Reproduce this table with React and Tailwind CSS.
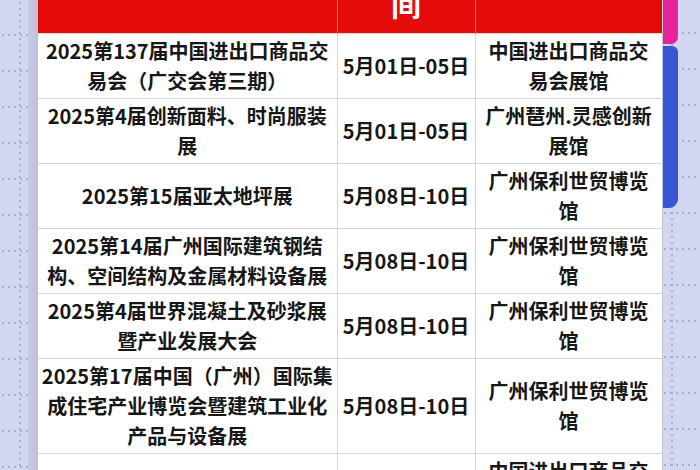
import React from 'react';

const rows = [
    {
        name: ['2025第137届中国进出口商品交', '易会（广交会第三期）'],
        date: '5月01日-05日',
        venue: ['中国进出口商品交', '易会展馆'],
    },
    {
        name: ['2025第4届创新面料、时尚服装', '展'],
        date: '5月01日-05日',
        venue: ['广州琶州.灵感创新', '展馆'],
    },
    {
        name: ['2025第15届亚太地坪展'],
        date: '5月08日-10日',
        venue: ['广州保利世贸博览', '馆'],
    },
    {
        name: ['2025第14届广州国际建筑钢结', '构、空间结构及金属材料设备展'],
        date: '5月08日-10日',
        venue: ['广州保利世贸博览', '馆'],
    },
    {
        name: ['2025第4届世界混凝土及砂浆展', '暨产业发展大会'],
        date: '5月08日-10日',
        venue: ['广州保利世贸博览', '馆'],
    },
    {
        name: ['2025第17届中国（广州）国际集', '成住宅产业博览会暨建筑工业化', '产品与设备展'],
        date: '5月08日-10日',
        venue: ['广州保利世贸博览', '馆'],
    },
    {
        name: ['2025中国（广州）国际美博会'],
        date: '5月10日-12日',
        venue: ['中国进出口商品交', '易会展馆'],
    },
];

function Lines({ lines }) {
    return lines.map((l, i) => (
        <React.Fragment key={i}>
            {i > 0 && <br />}
            {l}
        </React.Fragment>
    ));
}

export default function App() {
    const cell = 'border border-[#d6d6d6] px-0 py-[2px] text-center align-middle whitespace-nowrap';

    return (
        <div className="w-[700px] h-[470px] overflow-hidden flex bg-[#d3d6f1] font-['Noto_Sans_CJK_SC','Noto_Sans',sans-serif]">
            {/* Left gutter */}
            <div className="w-[38px] shrink-0 flex">
                <div className="w-[28px] bg-[image:radial-gradient(circle,#a9acd3_1px,transparent_1.3px),radial-gradient(circle,#a9acd3_1px,transparent_1.3px)] bg-[size:6px_36px,40px_6px] bg-[position:0_17px,0_0]" />
                <div className="w-[10px] bg-gradient-to-r from-[#c9cbe6] to-[#bec0db]" />
            </div>

            {/* Table (scrolled) */}
            <div className="w-[624px] shrink-0 bg-white overflow-hidden">
                <table className="w-full table-fixed border-collapse -mt-[63px] text-[20px] leading-[30px] font-bold text-[#171717]">
                    <colgroup>
                        <col className="w-[299px]" />
                        <col className="w-[138px]" />
                        <col className="w-[187px]" />
                    </colgroup>
                    <thead>
                        <tr className="h-[96px] bg-[#e60b0b] text-white text-[30px] leading-[36px]">
                            <th className="border-r border-[#ef6a6a]" />
                            <th className="border-r border-[#ef6a6a] text-center align-bottom pb-[12px]">间</th>
                            <th />
                        </tr>
                    </thead>
                    <tbody>
                        {rows.map((r, i) => (
                            <tr key={i} className="h-[65px]">
                                <td className={cell + ' border-l-0'}>
                                    <Lines lines={r.name} />
                                </td>
                                <td className={cell}>{r.date}</td>
                                <td className={cell + ' border-r-[#b9cfd0]'}>
                                    <Lines lines={r.venue} />
                                </td>
                            </tr>
                        ))}
                    </tbody>
                </table>
            </div>

            {/* Right gutter */}
            <div className="w-[38px] shrink-0 flex bg-[image:radial-gradient(circle,#a9acd3_1px,transparent_1.3px),radial-gradient(circle,#a9acd3_1px,transparent_1.3px)] bg-[size:6px_36px,40px_6px] bg-[position:0_15px,-10px_0]">
                <div className="w-[1px] bg-[#b7ccd2]" />
                <div className="w-[15px] flex flex-col">
                    <div className="h-[44px] bg-[#e5249a] rounded-br-[7px]" />
                    <div className="h-[162px] mt-[2px] bg-[#3656d3] rounded-tr-[6px] rounded-br-[9px]" />
                </div>
                <div className="flex-1" />
            </div>
        </div>
    );
}
